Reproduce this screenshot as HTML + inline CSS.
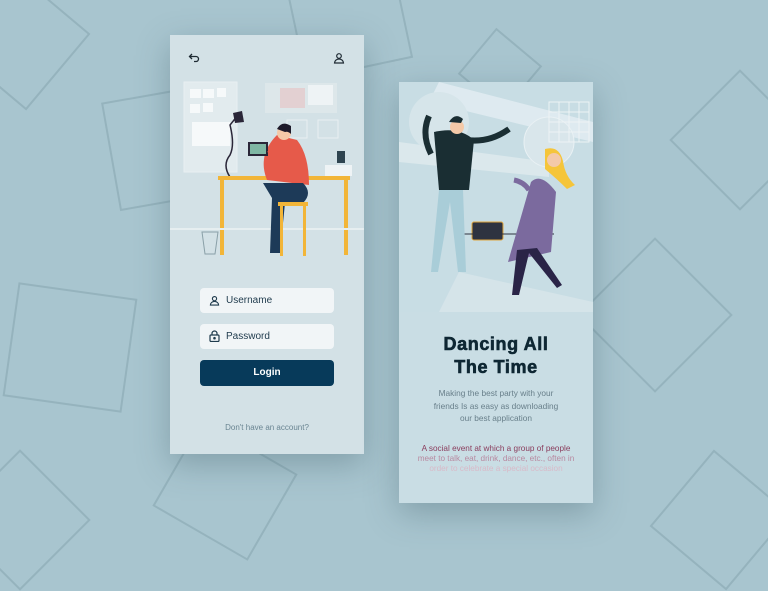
<!DOCTYPE html>
<html><head><style>
*{margin:0;padding:0;box-sizing:border-box}
body{width:768px;height:538px;overflow:hidden;background:#a8c5cf;font-family:"Liberation Sans",sans-serif;position:relative}
.sq{position:absolute;border:2px solid #95b3bd;}
.card{position:absolute;box-shadow:0 10px 30px rgba(60,90,100,.35)}
.in{position:absolute;left:30px;width:134px;height:25px;background:#f1f5f7;border-radius:4px;font-size:10px;color:#1e3a4c;padding-left:26px;line-height:25px}
</style></head><body>
<div class="sq" style="left:-30px;top:-10px;width:100px;height:100px;transform:rotate(40deg)"></div>
<div class="sq" style="left:295px;top:-20px;width:110px;height:90px;transform:rotate(-12deg)"></div>
<div class="sq" style="left:110px;top:95px;width:80px;height:110px;transform:rotate(-10deg)"></div>
<div class="sq" style="left:10px;top:290px;width:120px;height:115px;transform:rotate(8deg)"></div>
<div class="sq" style="left:-30px;top:470px;width:100px;height:100px;transform:rotate(45deg)"></div>
<div class="sq" style="left:170px;top:440px;width:110px;height:100px;transform:rotate(30deg)"></div>
<div class="sq" style="left:690px;top:90px;width:100px;height:100px;transform:rotate(45deg)"></div>
<div class="sq" style="left:600px;top:260px;width:110px;height:110px;transform:rotate(45deg)"></div>
<div class="sq" style="left:670px;top:470px;width:100px;height:100px;transform:rotate(40deg)"></div>
<div class="sq" style="left:470px;top:40px;width:60px;height:60px;transform:rotate(40deg)"></div>

<div class="card" style="left:170px;top:35px;width:194px;height:419px;background:#d3e1e6">
<svg style="position:absolute;left:18px;top:17px" width="12" height="12" viewBox="0 0 12 12" fill="none" stroke="#1e2a33" stroke-width="1.3"><path d="M4 2L1.5 4.5 4 7M1.5 4.5H8a2.5 2.5 0 010 5H6"/></svg>
<svg style="position:absolute;left:163px;top:17px" width="12" height="12" viewBox="0 0 12 12" fill="none" stroke="#1e2a33" stroke-width="1.2"><circle cx="6" cy="4" r="2.3"/><path d="M1.5 11a4.5 4 0 019 0z"/></svg>
<svg style="position:absolute;left:0;top:40px" width="194" height="190" viewBox="0 0 194 190">
<rect x="14" y="7" width="53" height="90" fill="#e2ebee" stroke="#e8eff1"/>
<g fill="#f6f9fa"><rect x="20" y="14" width="11" height="9"/><rect x="33" y="14" width="11" height="9"/><rect x="47" y="13" width="9" height="9"/><rect x="20" y="29" width="10" height="9"/><rect x="33" y="28" width="10" height="9"/><rect x="22" y="47" width="38" height="24"/></g>
<rect x="95" y="8" width="72" height="30" fill="#dde7ea"/><rect x="110" y="13" width="25" height="20" fill="#e3d0d2"/><rect x="138" y="10" width="25" height="20" fill="#eef3f5"/>
<rect x="117" y="45" width="20" height="18" fill="none" stroke="#e8eff1"/><rect x="148" y="45" width="20" height="18" fill="none" stroke="#e8eff1"/>
<path d="M60 102 Q52 90 60 80 Q65 70 60 50 L68 40" stroke="#2a2638" stroke-width="1.5" fill="none"/><path d="M63 38 l9 -2 l2 11 l-9 1z" fill="#2a2638"/>
<rect x="48" y="101" width="132" height="4" fill="#f2b538"/><rect x="50" y="105" width="4" height="75" fill="#f2b538"/><rect x="174" y="105" width="4" height="75" fill="#f2b538"/>
<rect x="155" y="90" width="27" height="11" fill="#eef3f5"/><rect x="167" y="76" width="8" height="12" fill="#2e4450"/>
<rect x="0" y="153" width="194" height="2" fill="#e6eef0"/>
<path d="M32 157 h16 l-3 22 h-10z" fill="none" stroke="#8aa0a8"/>
<path d="M97 105 q-10 -25 10 -45 l20 5 q12 15 12 45z" fill="#e65a4a"/>
<path d="M93 108 h40 q10 10 0 20 h-18 l-5 50 h-10 l2 -55z" fill="#1d3a58"/>
<rect x="108" y="127" width="30" height="4" fill="#f2b538"/><rect x="110" y="131" width="3" height="50" fill="#f2b538"/><rect x="133" y="131" width="3" height="50" fill="#f2b538"/>
<circle cx="114" cy="58" r="7" fill="#f4c9a8"/><path d="M107 54 q5 -9 14 -3 l0 8 q-3 -3 -6 -2z" fill="#1d1a2a"/>
<rect x="78" y="67" width="20" height="14" fill="#2a2638"/><rect x="80" y="69" width="16" height="10" fill="#7fb7a4"/>
<path d="M98 78 l10 -3 l10 -8" stroke="#e65a4a" stroke-width="4" fill="none"/>
</svg>
<div class="in" style="top:253px"><svg style="position:absolute;left:9px;top:7px" width="11" height="11" viewBox="0 0 12 12" fill="none" stroke="#1e3a4c" stroke-width="1.2"><circle cx="6" cy="4" r="2.3"/><path d="M1.5 11a4.5 4 0 019 0z"/></svg>Username</div>
<div class="in" style="top:289px"><svg style="position:absolute;left:9px;top:6px" width="11" height="12" viewBox="0 0 11 12" fill="none" stroke="#1e3a4c" stroke-width="1.2"><path d="M3 5V3.5a2.5 2.5 0 015 0V5"/><rect x="1" y="5" width="9" height="6.5" rx="1"/><circle cx="5.5" cy="8.2" r=".7" fill="#1e3a4c"/></svg>Password</div>
<div style="position:absolute;left:30px;top:325px;width:134px;height:26px;background:#073a5a;border-radius:4px;color:#fff;font-size:10px;font-weight:bold;text-align:center;line-height:26px">Login</div>
<div style="position:absolute;left:0;width:194px;top:388px;text-align:center;font-size:8px;color:#6a8592">Don't have an account?</div>
</div>

<div class="card" style="left:399px;top:82px;width:194px;height:421px;background:#c9dde4;overflow:hidden">
<svg style="position:absolute;left:0;top:0" width="194" height="230" viewBox="0 0 194 230">
<rect width="194" height="230" fill="#c8dde4"/>
<path d="M40 0 L194 40 L194 60 L30 20z" fill="#e4eef2" opacity=".8"/><path d="M0 60 L150 80 L150 95 L0 80z" fill="#dbe8ec"/>
<circle cx="40" cy="40" r="30" fill="#d6e5ea"/><circle cx="150" cy="60" r="25" fill="#d9e6eb" stroke="#e9f1f4"/>
<path d="M150 20 h40 v40 h-40z M160 20 v40 M170 20 v40 M180 20 v40 M150 30 h40 M150 40 h40 M150 50 h40" stroke="#edf3f5" fill="none"/>
<path d="M60 190 L194 220 L194 230 L40 230z" fill="#d5e4e9"/>
<rect x="73" y="140" width="31" height="18" rx="2" fill="#2e3340" stroke="#e0a53c"/><line x1="58" y1="152" x2="155" y2="152" stroke="#2e3340"/>
<path d="M32 72 q-10 -20 -2 -38 M55 55 q30 10 55 -8" stroke="#1a2e33" stroke-width="6" fill="none"/>
<path d="M35 50 q25 -6 40 8 l-5 50 l-30 0z" fill="#1a2e33"/>
<path d="M40 108 l-8 82 h7 l12 -70 l8 70 h8 l-3 -82z" fill="#a9cdd8"/>
<circle cx="58" cy="45" r="7" fill="#f4c9a8"/><path d="M50 40 q6 -10 14 -3 l-2 4z" fill="#1a2e33"/>
<path d="M132 100 q10 -10 25 10 l-5 60 l-43 10z" fill="#7b6a9e"/>
<path d="M146 67 q14 -4 18 12 q2 15 12 24 l-8 4 q-10 -10 -22 -20z" fill="#f5c53a"/><circle cx="155" cy="78" r="7" fill="#f4c9a8"/>
<path d="M118 168 l-5 45 h7 l10 -42 l28 35 l5 -3 l-25 -37z" fill="#2a2447"/>
<path d="M115 98 q10 2 15 10" stroke="#7b6a9e" stroke-width="5" fill="none"/>
</svg>
<div style="position:absolute;left:0;width:194px;top:251px;text-align:center;font-size:18px;font-weight:bold;color:#0e2733;line-height:23px;letter-spacing:.6px;-webkit-text-stroke:.6px #0e2733">Dancing All<br>The Time</div>
<div style="position:absolute;left:0;width:194px;top:305px;text-align:center;font-size:8.3px;color:#687f8a;line-height:12.6px">Making the best party with your<br>friends Is as easy as downloading<br>our best application</div>
<div style="position:absolute;left:0;width:194px;top:362px;text-align:center;font-size:8.2px;line-height:10px;color:#8a3c5c">A social event at which a group of people<br><span style="color:#b889a0">meet to talk, eat, drink, dance, etc., often in</span><br><span style="color:#d8bac8">order to celebrate a special occasion</span></div>
</div>
</body></html>
